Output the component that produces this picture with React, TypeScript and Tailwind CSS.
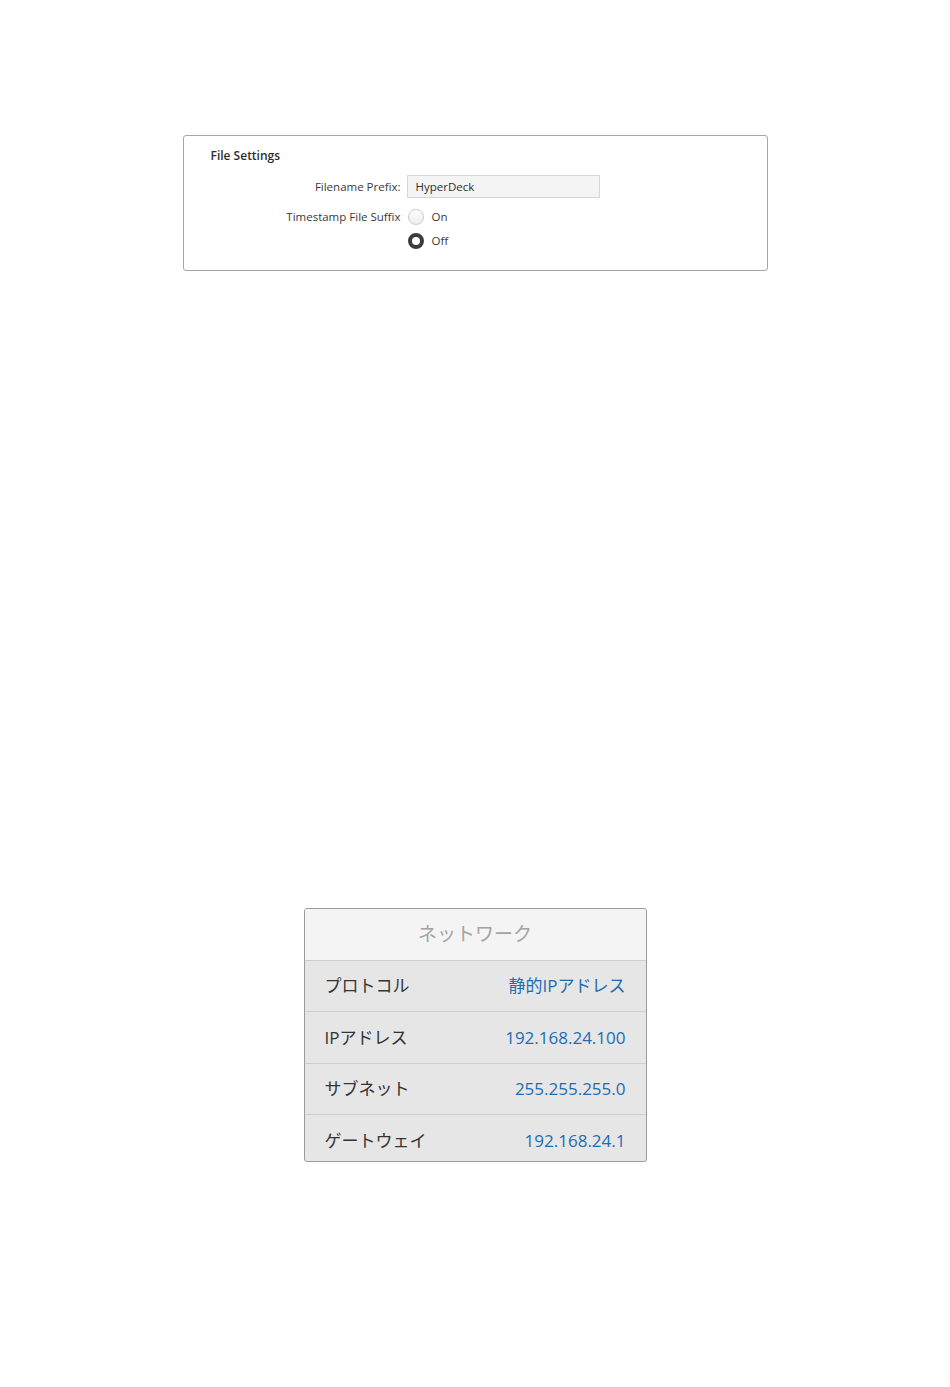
const latin = "font-['Open_Sans','Noto_Sans',sans-serif]";
const jp = "font-['Open_Sans','Noto_Sans_CJK_JP',sans-serif]";

function Radio({ checked, label }: { checked: boolean; label: string }) {
  return (
    <div className="flex h-[24px] items-center">
      {checked ? (
        <span className="box-border h-[16px] w-[16px] rounded-full border-[4px] border-[#3c3c3c] bg-white" />
      ) : (
        <span className="box-border h-[16px] w-[16px] rounded-full border border-[#c9c9c9] bg-gradient-to-b from-white to-[#ececec]" />
      )}
      <span className="ml-[8px] text-[11.5px] text-[#3a3a3a]">{label}</span>
    </div>
  );
}

function FileSettings() {
  return (
    <div
      className={`mx-auto box-border h-[136px] w-[585px] rounded-[3px] border border-[#a6a6a6] bg-white ${latin}`}
    >
      <div className="pl-[27px] pt-[11px] text-[12px] font-semibold leading-[18px] text-[#2e2e2e]">
        File Settings
      </div>
      <div className="mt-[10px] flex items-center">
        <div className="w-[217px] text-right text-[11.5px] text-[#3a3a3a]">Filename Prefix:</div>
        <div className="ml-[6px] box-border flex h-[23px] w-[193px] items-center border border-[#d6d6d6] bg-[#f4f4f4] pl-[8px] text-[11.5px] text-[#2e2e2e]">
          HyperDeck
        </div>
      </div>
      <div className="mt-[7px] flex items-start">
        <div className="flex h-[24px] w-[217px] items-center justify-end text-[11.5px] text-[#3a3a3a]">
          Timestamp File Suffix
        </div>
        <div className="ml-[7px] flex flex-col">
          <Radio checked={false} label="On" />
          <Radio checked={true} label="Off" />
        </div>
      </div>
    </div>
  );
}

// the last row is cut off by the panel's bottom edge
const rows = [
  { label: "プロトコル", value: "静的IPアドレス", h: "h-[51px]" },
  { label: "IPアドレス", value: "192.168.24.100", h: "h-[52px]" },
  { label: "サブネット", value: "255.255.255.0", h: "h-[51px]" },
  { label: "ゲートウェイ", value: "192.168.24.1", h: "h-[47px] pt-[5px]" },
];

function Network() {
  return (
    <div
      className={`mx-auto box-border w-[343px] overflow-hidden rounded-[3px] border border-[#9c9c9c] bg-[#e6e6e6] ${jp}`}
    >
      <div className="flex h-[51px] items-center justify-center bg-[#f4f4f4] text-[19px] text-[#a3a3a3]">
        ネットワーク
      </div>
      {rows.map((r) => (
        <div
          key={r.label}
          className={`flex items-center justify-between border-t border-[#cfcfcf] px-[20px] text-[17px] ${r.h}`}
        >
          <span className="text-[#333333]">{r.label}</span>
          <span className="text-[#1f6cb3]">{r.value}</span>
        </div>
      ))}
    </div>
  );
}

export default function App() {
  return (
    <div className="h-[1387px] w-[950px] bg-white pt-[135px]">
      <FileSettings />
      <div className="h-[637px]" />
      <Network />
    </div>
  );
}
